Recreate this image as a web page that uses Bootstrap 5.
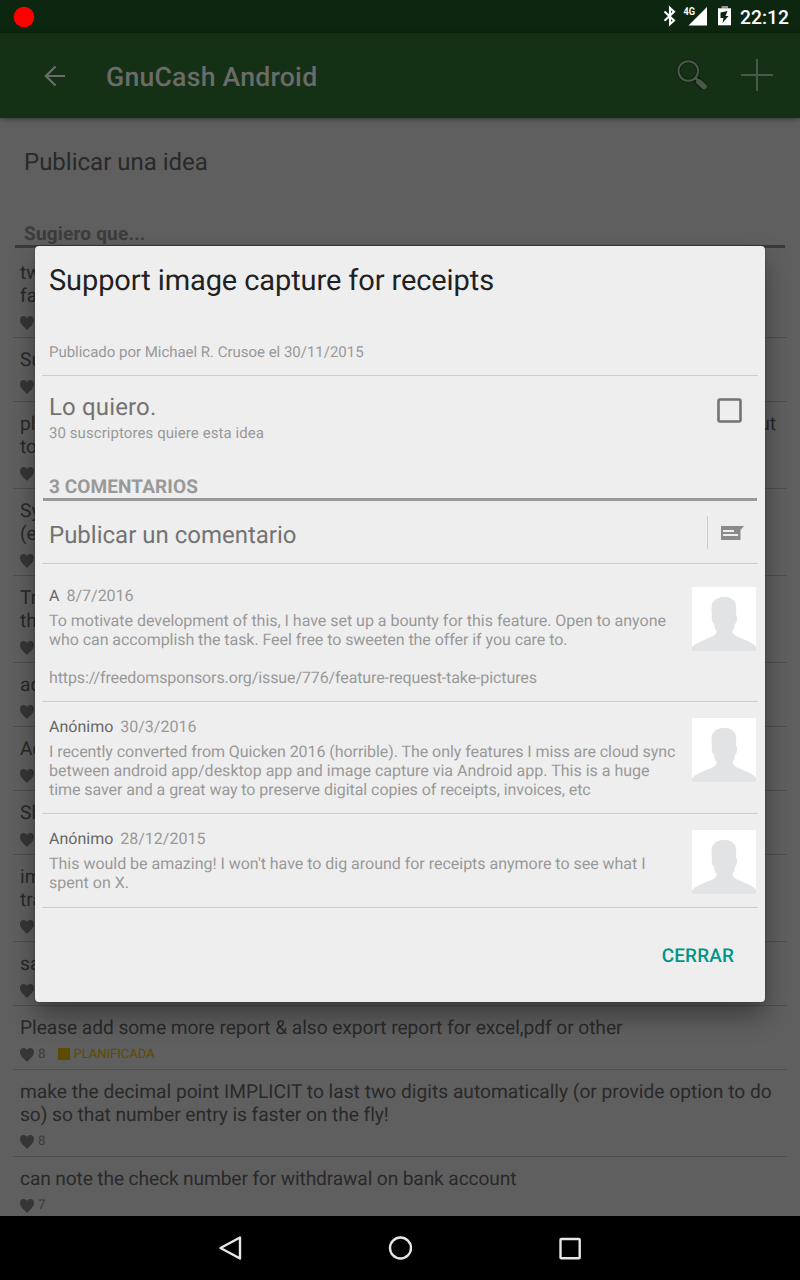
<!DOCTYPE html>
<html lang="es">
<head>
<meta charset="utf-8">
<meta name="viewport" content="width=device-width, initial-scale=1">
<title>GnuCash Android</title>
<link href="https://cdn.jsdelivr.net/npm/bootstrap@5.3.0/dist/css/bootstrap.min.css" rel="stylesheet">
<style>
body{font-family:Roboto,sans-serif;width:800px;height:1280px;background:#5f5f5f;color:#292929;text-rendering:geometricPrecision}
svg{display:block;flex:none}
.status{height:33px;background:#0d260f;color:#fff;padding:0 11px 0 13px;flex:none}
.clock{font-size:19.3px;font-weight:500;line-height:33px;padding-top:1px}
.appbar{height:85px;background:#143115;color:#6b6b6b;padding:0 25px 0 40px;flex:none;box-shadow:0 1px 5px rgba(0,0,0,.45);z-index:1}
.brand{font-size:26.67px;font-weight:500;line-height:32px;margin-left:36px;padding-top:2px;letter-spacing:.22px}
.add-icon{margin-left:29px}
.idea{font-size:24px;line-height:28px;padding:30px 24px 0;height:98px;flex:none}
.suggest{font-size:19px;font-weight:700;line-height:22px;color:#3c3c3c;margin:0 15px;padding:7px 9px 0;height:32px;border-bottom:3px solid #3a3a3a;letter-spacing:.2px;flex:none}
.ideas{padding:3px 13px 0;overflow:hidden}
.idea-row{border-bottom:1px solid #4e4e4e;padding:10px 7px 0;height:64px;font-size:19.2px;line-height:23px}
.idea-row.tall{height:87px}
.votes{font-size:13.33px;line-height:16px;height:16px;color:#3b3b3b;margin-top:8px;letter-spacing:0}
.votes svg{margin:-1px 4px 0 0}
.plan{color:#5e4a00;font-size:13px}
.plan i{width:12px;height:12px;background:#5e4a00;margin:-2px 4px 0 12px}
.sheet{left:35px;top:246px;width:730px;height:756px;background:#eee;border-radius:4px;z-index:5;box-shadow:0 14px 26px rgba(0,0,0,.36),0 0 2px rgba(0,0,0,.3);padding:0 7px}
.sheet-title{font-size:29px;line-height:34px;color:#212121;padding:18px 7px 0;height:96px;letter-spacing:-.1px}
.byline{font-size:15px;line-height:18px;color:#999;padding:1px 7px 0;height:34px;border-bottom:1px solid #ccc;letter-spacing:-.02px}
.want{height:98px;padding:17px 16px 0 7px}
.want-title{font-size:24px;line-height:28px;color:#737373;letter-spacing:.15px}
.want-sub{font-size:15px;line-height:18px;color:#999;margin-top:3px;letter-spacing:.07px}
.count{height:27px;border-bottom:3px solid #999;margin:0 1px;padding:2px 6px 0;font-size:19px;font-weight:700;line-height:22px;color:#999;letter-spacing:.1px}
.write{height:63px;border-bottom:1px solid #ccc;padding:0 14px 0 7px;font-size:24px;color:#737373}
.write-label{padding-top:6px}
.write-btn{border-left:1px solid #ccc;height:33px;padding-left:13px;margin-top:1px}
.comment{border-bottom:1px solid #ccc;padding:15px 2px 0 7px;font-size:16px;line-height:19px;color:#999}
.comment b{font-weight:400;color:#666;margin-right:7px}
.comment p{margin:6px 0 0}
.comment svg{margin-top:1px}
.comment-first{padding-top:22px}
.snug{letter-spacing:-.02px}
.tight{letter-spacing:-.06px}
.tighter{letter-spacing:-.11px}
.tightest{letter-spacing:-.135px}
.close-btn{font-size:19px;font-weight:500;line-height:22px;color:#009688;padding:37px 24px 0;letter-spacing:.1px}
.navkeys{height:64px;background:#000;flex:none;gap:146px;z-index:2}
</style>
<script src="https://cdn.jsdelivr.net/npm/bootstrap@5.3.0/dist/js/bootstrap.bundle.min.js"></script>
</head>
<body class="d-flex flex-column position-relative overflow-hidden m-0">
<svg width="0" height="0" class="position-absolute">
  <symbol id="heart" viewBox="0 0 14 14"><path fill="#363636" d="M7 14C6 12.500 0 8.500 0 4C0 1.500 1.500 0 3.600 0C5.200 0 6.400.8 7 2C7.600.8 8.800 0 10.400 0C12.500 0 14 1.500 14 4C14 8.500 8 12.500 7 14z"/></symbol>
  <symbol id="person" viewBox="0 0 64 64"><path fill="#fff" d="M0 0h64v64H0z"/><path fill="#e1e3e5" d="M0 64V60C4 55.500 14 52.500 20 49.500C23 48 25.500 46 24.500 44C22.800 42 22.300 39.500 22 37C20.500 36 19 32 20 28.500C19.500 24 19 18 21 15C23 12 27 10 33 10C38 10 40 12 41.500 13.500C44.500 15 44.500 22 44 27.500C46 30 45 35.500 43 37C42.500 40 42 42 40.500 44C40 46 42 48 45 49.500C51 52.500 61 55 64 60V64z"/></symbol>
</svg>

<div class="status d-flex align-items-center justify-content-between">
  <svg width="22" height="22" viewBox="0 0 22 22"><circle cx="11" cy="11" r="10.300" fill="red"/></svg>
  <div class="d-flex align-items-center">
    <svg width="78" height="33" viewBox="0 0 78 33">
      <path d="M2.500 11.500l9.500 9L8 24.200V8l4 3.700-9.500 9" fill="none" stroke="#fff" stroke-width="2.100"/>
      <text x="21.500" y="15" font-size="11" font-weight="700" fill="#fff" textLength="11.500" lengthAdjust="spacingAndGlyphs">4G</text>
      <path fill="#fff" d="M45 7v18.500H26.500z"/>
      <path fill="#8b978c" d="M59.500 6h6.500v2.500h-6.500z"/>
      <path fill="#fff" d="M56 8.300h13v17H56z"/>
      <path fill="#0d260f" d="M65.500 11L58.500 12.500V18h3l-1 5 6-7h-3z"/>
    </svg>
    <span class="clock ms-0">22:12</span>
  </div>
</div>

<nav class="appbar d-flex align-items-center">
  <svg width="30" height="30" viewBox="0 0 30 30"><path d="M15.500 5.500L5.800 15l9.700 9.500M6 15h19" fill="none" stroke="#6b6b6b" stroke-width="2.200"/></svg>
  <span class="brand">GnuCash Android</span>
  <svg class="ms-auto" width="36" height="36" viewBox="0 0 36 36">
    <g fill="none" stroke-linecap="round"><circle cx="16.300" cy="13" r="9.800" stroke="#0e200f" stroke-width="4"/><path d="M24 21l7 7" stroke="#0e200f" stroke-width="7.500"/><circle cx="16.300" cy="13" r="9.800" stroke="#4b594c" stroke-width="2"/><path d="M23.300 20l3 3" stroke="#4b594c" stroke-width="2.500"/><path d="M27 24l5 4.500" stroke="#4b594c" stroke-width="5.500"/></g>
  </svg>
  <svg class="add-icon" width="38" height="36" viewBox="0 0 38 36"><path d="M4 17h32M20 1v32" stroke="#4b594c" stroke-width="2"/></svg>
</nav>

<div class="idea">Publicar una idea</div>
<div class="suggest">Sugiero que...</div>

<main class="ideas flex-grow-1">
  <div class="idea-row tall">two<br>fast<div class="votes d-flex align-items-center"><svg width="14" height="14"><use href="#heart"/></svg></div></div>
  <div class="idea-row">Su<div class="votes d-flex align-items-center"><svg width="14" height="14"><use href="#heart"/></svg></div></div>
  <div class="idea-row tall"><div class="d-flex justify-content-between pe-1"><span>ple</span><span>but</span></div>to<div class="votes d-flex align-items-center"><svg width="14" height="14"><use href="#heart"/></svg></div></div>
  <div class="idea-row tall">Syn<br>(e<div class="votes d-flex align-items-center"><svg width="14" height="14"><use href="#heart"/></svg></div></div>
  <div class="idea-row tall">Tra<br>the<div class="votes d-flex align-items-center"><svg width="14" height="14"><use href="#heart"/></svg></div></div>
  <div class="idea-row">ad<div class="votes d-flex align-items-center"><svg width="14" height="14"><use href="#heart"/></svg></div></div>
  <div class="idea-row">Ad<div class="votes d-flex align-items-center"><svg width="14" height="14"><use href="#heart"/></svg></div></div>
  <div class="idea-row">Sh<div class="votes d-flex align-items-center"><svg width="14" height="14"><use href="#heart"/></svg></div></div>
  <div class="idea-row tall">im<br>tra<div class="votes d-flex align-items-center"><svg width="14" height="14"><use href="#heart"/></svg></div></div>
  <div class="idea-row">sa<div class="votes d-flex align-items-center"><svg width="14" height="14"><use href="#heart"/></svg></div></div>
  <div class="idea-row"><span class="tight">Please add some more report &amp; also export report for excel,pdf or other</span><div class="votes d-flex align-items-center"><svg width="14" height="14"><use href="#heart"/></svg><span>8</span><span class="plan d-flex align-items-center"><i></i>PLANIFICADA</span></div></div>
  <div class="idea-row tall">make the decimal point IMPLICIT to last two digits automatically (or provide option to do<br><span class="tight">so) so that number entry is faster on the fly!</span><div class="votes d-flex align-items-center"><svg width="14" height="14"><use href="#heart"/></svg><span>8</span></div></div>
  <div class="idea-row border-0"><span class="tightest">can note the check number for withdrawal on bank account</span><div class="votes d-flex align-items-center"><svg width="14" height="14"><use href="#heart"/></svg><span>7</span></div></div>
</main>

<footer class="navkeys d-flex align-items-center justify-content-center">
  <svg width="24" height="26" viewBox="0 0 24 26"><path d="M22 2.500v21L2.500 13z" fill="none" stroke="#e6e6e6" stroke-width="2.400" stroke-linejoin="round"/></svg>
  <svg width="24" height="24" viewBox="0 0 24 24"><circle cx="12.500" cy="12" r="10.500" fill="none" stroke="#e6e6e6" stroke-width="2.400"/></svg>
  <svg width="24" height="24" viewBox="0 0 24 24"><rect x="2.500" y="3" width="19.200" height="19.200" rx=".8" fill="none" stroke="#e6e6e6" stroke-width="2.400"/></svg>
</footer>

<section class="sheet position-absolute" role="dialog">
  <div class="sheet-title">Support image capture for receipts</div>
  <div class="byline">Publicado por Michael R. Crusoe el 30/11/2015</div>
  <div class="want d-flex justify-content-between">
    <div><div class="want-title">Lo quiero.</div><div class="want-sub">30 suscriptores quiere esta idea</div></div>
    <svg class="mt-1" width="26" height="26" viewBox="0 0 26 26"><rect x="2.500" y="2.500" width="22" height="22" rx="1.500" fill="none" stroke="#737373" stroke-width="2.600"/></svg>
  </div>
  <div class="count">3 COMENTARIOS</div>
  <div class="write d-flex align-items-center justify-content-between"><span class="write-label">Publicar un comentario</span>
    <div class="write-btn d-flex align-items-center"><svg width="23" height="14" viewBox="0 0 23 14"><path fill="#8a8a8a" d="M0 0h23l-3.500 4v10H0z"/><path d="M2 5h11M2 9h15" stroke="#eee" stroke-width="2"/></svg></div>
  </div>
  <article class="comment comment-first d-flex justify-content-between" style="height:138px">
    <div><b>A</b>8/7/2016<p><span class="snug">To motivate development of this, I have set up a bounty for this feature. Open to anyone</span><br><span class="tight">who can accomplish the task. Feel free to sweeten the offer if you care to.</span><br><br><span class="tighter">https://freedomsponsors.org/issue/776/feature-request-take-pictures</span></p></div>
    <svg width="64" height="64"><use href="#person"/></svg>
  </article>
  <article class="comment d-flex justify-content-between" style="height:112px">
    <div><b>Anónimo</b>30/3/2016<p><span class="tight">I recently converted from Quicken 2016 (horrible). The only features I miss are cloud sync</span><br>between android app/desktop app and image capture via Android app. This is a huge<br><span class="tight">time saver and a great way to preserve digital copies of receipts, invoices, etc</span></p></div>
    <svg width="64" height="64"><use href="#person"/></svg>
  </article>
  <article class="comment d-flex justify-content-between" style="height:94px">
    <div><b>Anónimo</b>28/12/2015<p><span class="snug">This would be amazing! I won't have to dig around for receipts anymore to see what I</span><br>spent on X.</p></div>
    <svg width="64" height="64"><use href="#person"/></svg>
  </article>
  <div class="close-btn text-end">CERRAR</div>
</section>
</body>
</html>
